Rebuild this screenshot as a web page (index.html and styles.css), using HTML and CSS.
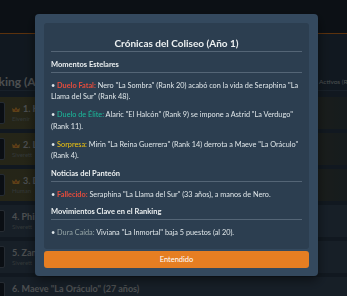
FILE: index.html
```html
<!DOCTYPE html>
<html lang="es">
<head>
    <meta charset="UTF-8" />
    <meta name="viewport" content="width=device-width, initial-scale=1.0" />
    <title>Coliseo</title>
    <link rel="stylesheet" href="styles.css">
</head>
<body>
    <div class="page">
        <header class="topbar"></header>
        <div class="toolbar">
            <h2>Ranking (Año 1)</h2>
            <span class="filter">Activos (Ranking)</span>
        </div>
        <ul class="ranking">
            <li class="row top">
                <div class="avatar"></div>
                <div class="info">
                    <div class="name"><svg class="crown" viewBox="0 0 10 8"><path d="M1 7h8l1-5-3 2-2-3-2 3-3-2z" fill="#e6a23c"/><circle cx="5" cy="5" r="1" fill="#c0392b"/></svg>1. Kael "El Invicto" (31 años)</div>
                    <div class="sub">Elvenir</div>
                </div>
            </li>
            <li class="row top">
                <div class="avatar"></div>
                <div class="info">
                    <div class="name"><svg class="crown" viewBox="0 0 10 8"><path d="M1 7h8l1-5-3 2-2-3-2 3-3-2z" fill="#e6a23c"/><circle cx="5" cy="5" r="1" fill="#c0392b"/></svg>2. Lyra "La Tormenta" (25 años)</div>
                    <div class="sub">Siverett</div>
                </div>
            </li>
            <li class="row top">
                <div class="avatar"></div>
                <div class="info">
                    <div class="name"><svg class="crown" viewBox="0 0 10 8"><path d="M1 7h8l1-5-3 2-2-3-2 3-3-2z" fill="#e6a23c"/><circle cx="5" cy="5" r="1" fill="#c0392b"/></svg>3. Dorian "El Muro" (29 años)</div>
                    <div class="sub">Human</div>
                </div>
            </li>
            <li class="row">
                <div class="avatar"></div>
                <div class="info">
                    <div class="name">4. Phineas "El Zorro" (30 años)</div>
                    <div class="sub">Siverett</div>
                </div>
            </li>
            <li class="row">
                <div class="avatar"></div>
                <div class="info">
                    <div class="name">5. Zane "El Rayo" (24 años)</div>
                    <div class="sub">Siverett</div>
                </div>
            </li>
            <li class="row">
                <div class="avatar"></div>
                <div class="info">
                    <div class="name">6. Maeve "La Oráculo" (27 años)</div>
                    <div class="sub">Elvenir</div>
                </div>
            </li>
        </ul>
    </div>

    <div class="overlay">
        <div class="modal">
            <div class="modal-body">
                <h3>Crónicas del Coliseo (Año 1)</h3>

                <h4>Momentos Estelares</h4>
                <p>• <span class="fatal">Duelo Fatal:</span> Nero "La Sombra" (Rank 20) acabó con la vida de Seraphina "La Llama del Sur" (Rank 48).</p>
                <p>• <span class="elite">Duelo de Élite:</span> Alaric "El Halcón" (Rank 9) se impone a Astrid "La Verdugo" (Rank 11).</p>
                <p>• <span class="surprise">Sorpresa:</span> Mirin "La Reina Guerrera" (Rank 14) derrota a Maeve "La Oráculo" (Rank 4).</p>

                <h4>Noticias del Panteón</h4>
                <p>• <span class="fatal">Fallecido:</span> Seraphina "La Llama del Sur" (33 años), a manos de Nero.</p>

                <h4>Movimientos Clave en el Ranking</h4>
                <p>• <span class="drop">Dura Caída:</span> Viviana "La Inmortal" baja 5 puestos (al 20).</p>
            </div>
            <button class="btn">Entendido</button>
        </div>
    </div>
</body>
</html>
```

FILE: styles.css
```css
body {
    margin: 0;
    font-family: Lato, "Open Sans", sans-serif;
    background-color: #2c3e50;
    color: #ecf0f1;
    overflow: hidden;
}

.page {
    width: 400px;
    margin-left: -22px;
}

.topbar {
    height: 33px;
    background-color: #1f2a36;
    border-bottom: 1px solid #e67e22;
}

.toolbar {
    display: flex;
    align-items: center;
    justify-content: space-between;
    height: 57px;
    padding-top: 38px;
    box-sizing: border-box;
    border-bottom: 1px solid #3d5266;
}

.toolbar h2 {
    margin: 0;
    font-size: 12px;
    line-height: 15px;
    color: #bdc3c7;
}

.filter {
    width: 59px;
    font-size: 6.5px;
    white-space: nowrap;
    color: #bdc3c7;
}

.ranking {
    list-style: none;
    margin: 6px 0 0;
    padding: 0;
}

.row {
    display: flex;
    align-items: flex-start;
    gap: 7px;
    height: 32px;
    box-sizing: border-box;
    padding: 5px;
    margin-bottom: 4px;
    background-color: #3a4e63;
}

.row.top {
    background: linear-gradient(90deg, #5e5e3c 0%, #56573a 70%, #2c3e50 100%);
}

.avatar {
    width: 22px;
    height: 22px;
    flex-shrink: 0;
    box-sizing: border-box;
    background-color: #1a2530;
    border: 1px solid #5d6d7e;
    border-radius: 2px;
}

.info {
    padding-top: 1px;
}

.name {
    display: flex;
    align-items: center;
    gap: 3px;
    font-size: 9px;
    font-weight: bold;
    line-height: 12px;
    color: #bdc3c7;
    white-space: nowrap;
}

.crown {
    width: 8px;
    height: 7px;
}

.sub {
    font-size: 6px;
    line-height: 8px;
    color: #7f8c8d;
}

/* ventana de crónicas */
.overlay {
    position: fixed;
    inset: 0;
    display: flex;
    justify-content: center;
    align-items: center;
    padding: 0 0 6px 6px;
    background-color: rgba(0, 0, 0, 0.6);
}

.modal {
    display: flex;
    flex-direction: column;
    width: 283px;
    max-height: 90vh;
    box-sizing: border-box;
    padding: 9px 9px 8px;
    background-color: #34495e;
    border-radius: 4px;
    box-shadow: 0 4px 12px rgba(0, 0, 0, 0.5);
}

.modal-body {
    overflow-y: auto;
    padding: 7px 7px 4px;
    margin-bottom: 2px;
    background-color: #2c3e50;
    border-radius: 3px;
}

.modal-body h3 {
    margin: 7px 0 8px;
    padding-bottom: 1px;
    font-size: 10px;
    line-height: 13px;
    text-align: center;
    color: #ecf0f1;
    border-bottom: 1px solid #546576;
}

.modal-body h4 {
    margin: 7px 0;
    padding-bottom: 2px;
    font-size: 7.5px;
    line-height: 10px;
    color: #ecf0f1;
    border-bottom: 1px solid #546576;
}

.modal-body p {
    margin: 0 0 6.5px;
    font-size: 7.3px;
    line-height: 11.5px;
    color: #dfe6e9;
}

.fatal {
    color: #e74c3c;
    font-weight: bold;
}

.elite {
    color: #1abc9c;
}

.surprise {
    color: #f1c40f;
}

.drop {
    color: #95a5a6;
}

.btn {
    width: 100%;
    height: 17px;
    padding: 0;
    font-family: Lato, sans-serif;
    font-size: 7.5px;
    font-weight: normal;
    color: #fff;
    background-color: #e67e22;
    border: none;
    border-radius: 3px;
    cursor: pointer;
}
```
